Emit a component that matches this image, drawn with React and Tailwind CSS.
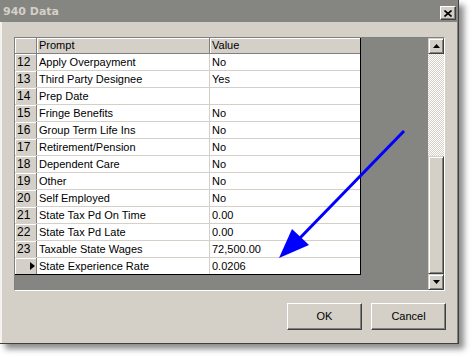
import React from "react";

export default function App() {
  // grid rows: number, prompt, value
  const rows = [
    { n: "12", prompt: "Apply Overpayment", value: "No" },
    { n: "13", prompt: "Third Party Designee", value: "Yes" },
    { n: "14", prompt: "Prep Date", value: "" },
    { n: "15", prompt: "Fringe Benefits", value: "No" },
    { n: "16", prompt: "Group Term Life Ins", value: "No" },
    { n: "17", prompt: "Retirement/Pension", value: "No" },
    { n: "18", prompt: "Dependent Care", value: "No" },
    { n: "19", prompt: "Other", value: "No" },
    { n: "20", prompt: "Self Employed", value: "No" },
    { n: "21", prompt: "State Tax Pd On Time", value: "0.00" },
    { n: "22", prompt: "State Tax Pd Late", value: "0.00" },
    { n: "23", prompt: "Taxable State Wages", value: "72,500.00" },
    { n: "", prompt: "State Experience Rate", value: "0.0206", current: true },
  ];

  return (
    <div className="w-[474px] h-[358px] bg-white font-['Liberation_Sans',Arial,sans-serif] text-black">
      <div className="relative w-[459px] h-[344px] flex flex-col bg-[#d4d0c8] border-r border-b border-[#404040] shadow-[5px_5px_6px_rgba(0,0,0,0.45)]">
        {/* Title bar */}
        <div className="h-[22px] shrink-0 flex items-center justify-between bg-[#858581] pl-[3px] pr-[2px]">
          <span className="font-['DejaVu_Sans',Verdana,sans-serif] font-bold text-[11px] text-[#d4d0c8] leading-none">
            940 Data
          </span>
          <div className="w-[16px] h-[14px] mt-[4px] flex items-center justify-center bg-[#d4d0c8] border border-t-white border-l-white border-r-[#404040] border-b-[#404040] shadow-[inset_-1px_-1px_0_#808080]">
            <svg width="8" height="7" viewBox="0 0 8 7">
              <path d="M0.5 0.5 L7.5 6.5 M7.5 0.5 L0.5 6.5" stroke="#000" strokeWidth="1.6" />
            </svg>
          </div>
        </div>

        {/* Body */}
        <div className="flex-1 flex flex-col border-l-2 border-l-[#f4f3ef] border-r border-r-[#808080]">
          {/* Grid control */}
          <div className="ml-[12px] mt-[15px] w-[431px] h-[254px] flex border border-t-[#808080] border-l-[#808080] border-r-white border-b-white">
            <div className="flex-1 bg-[#858581]">
              <div className="w-[346px] border-r border-b border-black bg-white text-[11px]">
                {/* Header */}
                <div className="flex h-[16px] bg-[#d4d0c8] border-b border-[#808080]">
                  <div className="w-[21px] shadow-[inset_1px_1px_0_#fff]" />
                  <div className="w-px bg-[#808080]" />
                  <div className="w-[172px] pl-[2px] leading-[15px] shadow-[inset_1px_1px_0_#fff]">Prompt</div>
                  <div className="w-px bg-[#808080]" />
                  <div className="w-[150px] pl-[2px] leading-[15px] shadow-[inset_1px_1px_0_#fff]">Value</div>
                </div>
                {/* Rows */}
                {rows.map((r, i) => (
                  <div
                    key={i}
                    className={
                      i < rows.length - 1
                        ? "flex h-[17px] border-b border-[#d4d0c8]"
                        : "flex h-[16px]"
                    }
                  >
                    <div className="w-[21px] bg-[#d4d0c8] pl-[2px] flex items-center text-[12px] leading-none shadow-[inset_1px_1px_0_#fff]">
                      {r.current ? (
                        <svg width="5" height="8" viewBox="0 0 5 8" className="ml-[13px]">
                          <path d="M0 0 L5 4 L0 8 Z" fill="#000" />
                        </svg>
                      ) : (
                        r.n
                      )}
                    </div>
                    <div className="w-px bg-[#808080]" />
                    <div className="w-[172px] pl-[2px] leading-[16px]">{r.prompt}</div>
                    <div className="w-px bg-[#d4d0c8]" />
                    <div className="w-[150px] pl-[2px] leading-[16px]">{r.value}</div>
                  </div>
                ))}
              </div>
            </div>

            {/* Scrollbar */}
            <div className="w-[16px] flex flex-col">
              <div className="h-[16px] flex items-center justify-center bg-[#d4d0c8] border border-t-[#d4d0c8] border-l-[#d4d0c8] border-r-[#404040] border-b-[#404040] shadow-[inset_1px_1px_0_#fff,inset_-1px_-1px_0_#808080]">
                <svg width="7" height="4" viewBox="0 0 7 4">
                  <path d="M3.5 0 L7 4 L0 4 Z" fill="#000" />
                </svg>
              </div>
              <div className="flex-1 bg-[repeating-conic-gradient(#d4d0c8_0%_25%,#ffffff_0%_50%)] bg-[length:2px_2px]" />
              <div className="h-[118px] bg-[#d4d0c8] border border-t-[#d4d0c8] border-l-[#d4d0c8] border-r-[#404040] border-b-[#404040] shadow-[inset_1px_1px_0_#fff,inset_-1px_-1px_0_#808080]" />
              <div className="h-[16px] flex items-center justify-center bg-[#d4d0c8] border border-t-[#d4d0c8] border-l-[#d4d0c8] border-r-[#404040] border-b-[#404040] shadow-[inset_1px_1px_0_#fff,inset_-1px_-1px_0_#808080]">
                <svg width="7" height="4" viewBox="0 0 7 4">
                  <path d="M0 0 L7 0 L3.5 4 Z" fill="#000" />
                </svg>
              </div>
            </div>
          </div>

          {/* Buttons */}
          <div className="mt-[12px] ml-[12px] w-[432px] flex justify-end gap-[9px] text-[11px]">
            <button className="w-[75px] h-[27px] bg-[#d4d0c8] border border-t-white border-l-white border-r-[#404040] border-b-[#404040] shadow-[inset_-1px_-1px_0_#808080]">
              OK
            </button>
            <button className="w-[75px] h-[27px] bg-[#d4d0c8] border border-t-white border-l-white border-r-[#404040] border-b-[#404040] shadow-[inset_-1px_-1px_0_#808080]">
              Cancel
            </button>
          </div>
        </div>

        {/* Blue annotation arrow */}
        <svg className="absolute left-0 top-0 pointer-events-none" width="459" height="344" viewBox="0 0 459 344">
          <line x1="404" y1="131" x2="298" y2="240" stroke="#0000ff" strokeWidth="3" />
          <polygon points="279,258 292,229 309,245" fill="#0000ff" />
        </svg>
      </div>
    </div>
  );
}
